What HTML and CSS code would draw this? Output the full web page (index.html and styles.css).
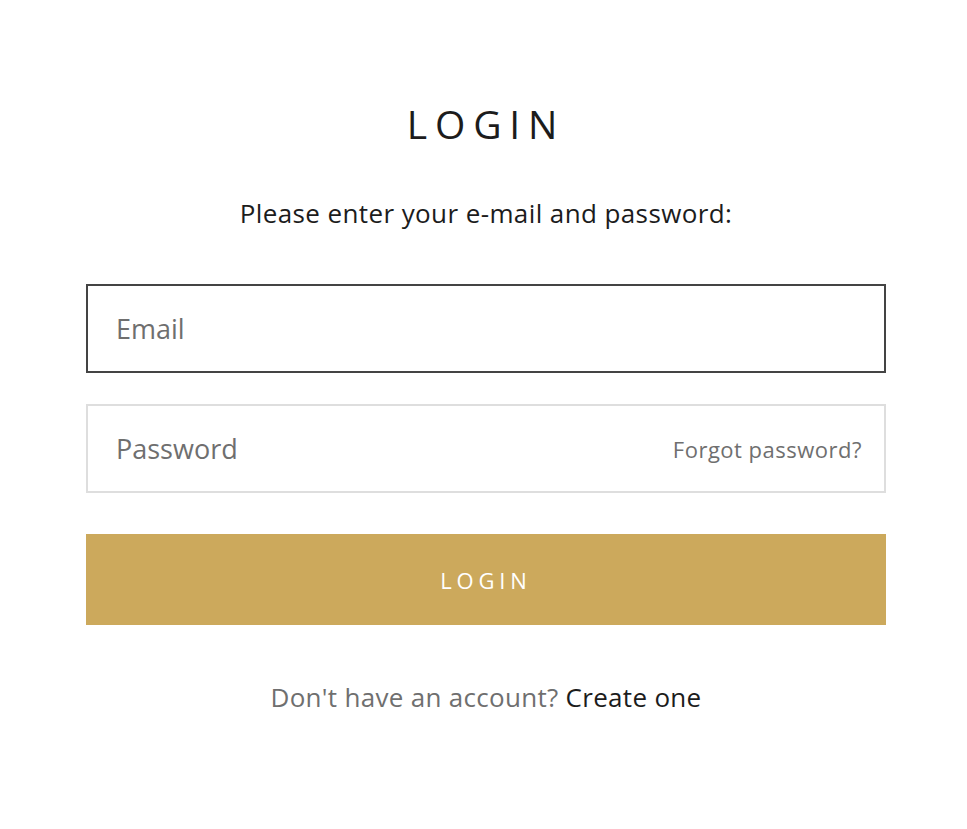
FILE: index.html
```html
<!DOCTYPE html>
<html lang="en">
<head>
    <meta charset="UTF-8">
    <meta name="viewport" content="width=device-width, initial-scale=1.0">
    <link rel="stylesheet" href="styles.css">
    <title>Login</title>
</head>
<body>
    <main class="login">
        <h1 class="login-title">Login</h1>
        <p class="login-hint">Please enter your e-mail and password:</p>

        <form class="login-form">
            <div class="field field-active">
                <input class="field-input" type="email" placeholder="Email">
            </div>
            <div class="field">
                <input class="field-input" type="password" placeholder="Password">
                <a class="forgot-link" href="#">Forgot password?</a>
            </div>
            <button class="login-button" type="submit">Login</button>
        </form>

        <p class="signup">Don't have an account? <a href="#">Create one</a></p>
    </main>
</body>
</html>
```

FILE: styles.css
```css
* {
    margin: 0;
    padding: 0;
    box-sizing: border-box;
}

body {
    font-family: 'Open Sans', 'Noto Sans', sans-serif;
    background-color: #fff;
    color: #1c1c1c;
    padding-left: 5px;
}

.login {
    width: 800px;
    margin: 0 auto;
    padding-top: 100px;
    text-align: center;
}

.login-title {
    font-size: 39px;
    font-weight: 400;
    letter-spacing: 0.2em;
    text-transform: uppercase;
    line-height: 48px;
}

.login-hint {
    font-size: 26px;
    line-height: 32px;
    letter-spacing: 0.4px;
    margin-top: 49px;
}

.login-form {
    margin-top: 55px;
    display: flex;
    flex-direction: column;
}

.field {
    display: flex;
    align-items: center;
    height: 89px;
    border: 2px solid #dedede;
    padding: 0 22px 0 28px;
}

.field + .field {
    margin-top: 31px;
}

.field-active {
    border-color: #444;
}

.field-input {
    flex: 1;
    border: none;
    outline: none;
    font-family: inherit;
    font-size: 27px;
    color: #1c1c1c;
    background: transparent;
}

.field-input::placeholder {
    color: #6f6f6f;
}

.forgot-link {
    font-size: 22px;
    letter-spacing: 0.5px;
    color: #6f6f6f;
    text-decoration: none;
}

.login-button {
    margin-top: 41px;
    height: 91px;
    border: none;
    background-color: #cca95c;
    color: #fff;
    font-family: inherit;
    font-size: 22px;
    letter-spacing: 0.22em;
    text-transform: uppercase;
    cursor: pointer;
}

.signup {
    margin-top: 54px;
    font-size: 26px;
    letter-spacing: 0.3px;
    color: #6f6f6f;
}

.signup a {
    color: #1c1c1c;
    text-decoration: none;
}
```
